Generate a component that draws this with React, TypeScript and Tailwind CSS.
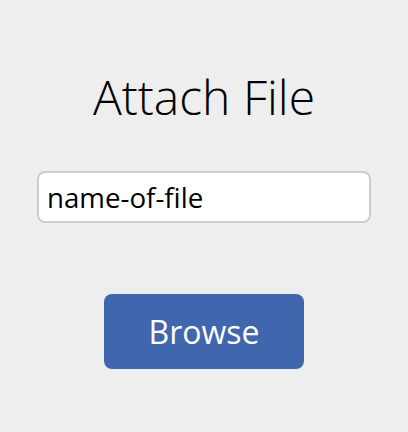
export default function App() {
  return (
    <div
      className="w-[408px] h-[432px] bg-[#eeeeee] flex flex-col items-center"
      style={{ fontFamily: '"Open Sans", sans-serif' }}
    >
      <h1 className="mt-[69px] text-[48px] font-light leading-[56px] text-black">Attach File</h1>
      <input
        type="text"
        defaultValue="name-of-file"
        className="mt-[46px] w-[334px] h-[52px] rounded-[8px] border-2 border-[#cccccc] bg-white px-[8px] text-[27.7px] text-black outline-none"
      />
      <button className="mt-[71px] w-[200px] h-[75px] rounded-[8px] bg-[#4066ae] text-[32px] text-white">
        Browse
      </button>
    </div>
  );
}
